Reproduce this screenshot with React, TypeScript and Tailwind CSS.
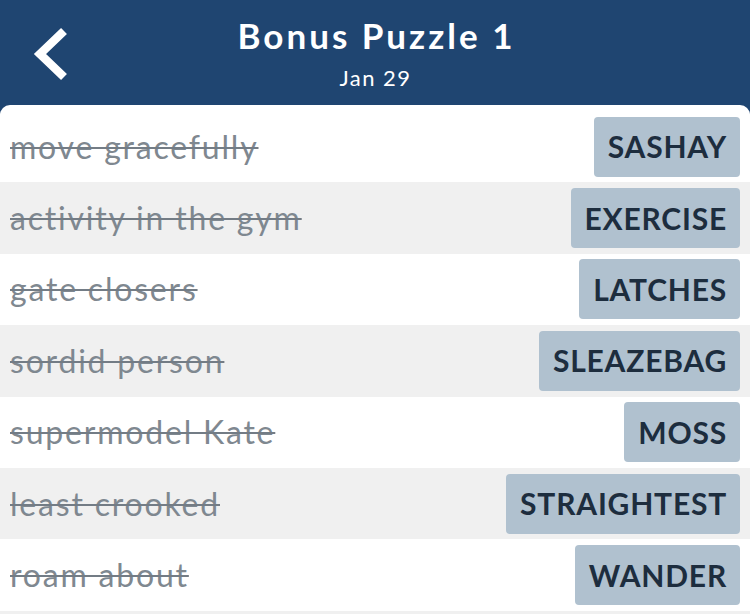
import React from "react";

const rows = [
  { clue: "move gracefully", answer: "SASHAY" },
  { clue: "activity in the gym", answer: "EXERCISE" },
  { clue: "gate closers", answer: "LATCHES" },
  { clue: "sordid person", answer: "SLEAZEBAG" },
  { clue: "supermodel Kate", answer: "MOSS" },
  { clue: "least crooked", answer: "STRAIGHTEST" },
  { clue: "roam about", answer: "WANDER" },
];

export default function App() {
  return (
    <div
      className="w-[750px] h-[614px] overflow-hidden bg-[#1f4571]"
      style={{ fontFamily: "Lato, sans-serif" }}
    >
      <div className="relative h-[105px] flex flex-col items-center">
        <svg
          className="absolute left-[30px] top-[23px]"
          width="44"
          height="62"
          viewBox="0 0 44 62"
        >
          <path
            d="M34 8 L10 31 L34 54"
            fill="none"
            stroke="#ffffff"
            strokeWidth="8.5"
            strokeLinecap="butt"
            strokeLinejoin="miter"
          />
        </svg>
        <div className="mt-[12px] pl-[3px] text-white font-bold text-[35px] leading-[46px] tracking-[3px]">
          Bonus Puzzle 1
        </div>
        <div className="mt-[6.5px] pl-[1px] text-white text-[22px] leading-[26px] tracking-[1.5px]">
          Jan 29
        </div>
      </div>
      <div className="bg-white rounded-t-[10px] pt-[6px] h-[509px] overflow-hidden">
        {rows.map((r, i) => (
          <div
            key={i}
            className={`h-[71.4px] flex items-center justify-between pl-[10px] pr-[10px] ${
              i % 2 === 1 ? "bg-[#f0f0f0]" : "bg-white"
            }`}
          >
            <span className="text-[32px] tracking-[1.8px] text-[#7f8890] line-through decoration-[#737c85] decoration-2">
              {r.clue}
            </span>
            <span className="h-[60px] flex items-center pl-[14px] pr-[13px] rounded-[4px] bg-[#b0c1cf] text-[#1d2d3e] font-bold text-[30px] tracking-[0.8px]">
              {r.answer}
            </span>
          </div>
        ))}
        <div className="h-[10px] bg-[#f0f0f0]" />
      </div>
    </div>
  );
}
